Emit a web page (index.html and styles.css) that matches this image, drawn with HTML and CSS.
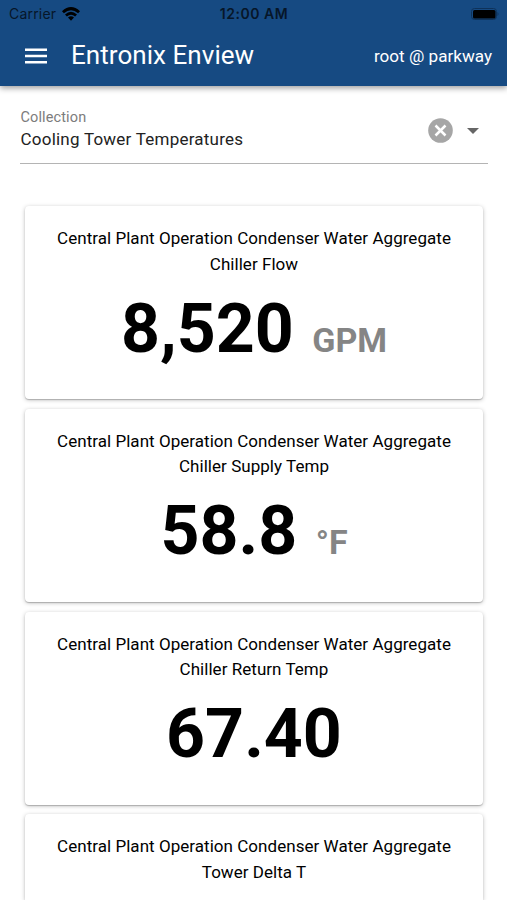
FILE: index.html
```html
<!DOCTYPE html>
<html lang="en">
<head>
<meta charset="utf-8">
<title>Entronix Enview</title>
<link rel="stylesheet" href="styles.css">
</head>
<body>
<header class="appbar">
  <div class="status">
    <div class="carrier"><span>Carrier</span>
      <svg class="wifi" width="18" height="14" viewBox="0 0 18 14"><path d="M0 4.200Q9-4 18 4.200L16.100 6.200Q9 .2 1.900 6.200ZM3 7.400Q9 2.200 15 7.400L13.100 9.400Q9 6 4.900 9.400ZM6 10.500Q9 8 12 10.500L9 13.700Z"/></svg>
    </div>
    <span class="time">12:00 AM</span>
    <svg class="battery" width="28" height="12" viewBox="0 0 28 12"><rect x=".5" y=".5" width="25" height="11" rx="3" fill="none" stroke="#0e325a"/><rect x="2" y="2" width="22.500" height="8.500" rx="1.500"/><path d="M26.500 4Q28.500 6 26.500 8Z" fill="#0e325a"/></svg>
  </div>
  <div class="toolbar">
    <svg class="menu" width="22" height="16" viewBox="0 0 22 16"><path d="M0 .5h22V3H0zM0 6.700h22v2.500H0zM0 12.900h22v2.500H0z"/></svg>
    <h1>Entronix Enview</h1>
    <span class="user">root @ parkway</span>
  </div>
</header>
<main>
  <div class="select">
    <div class="field"><label>Collection</label><span>Cooling Tower Temperatures</span></div>
    <svg class="clear" width="25" height="25" viewBox="0 0 25 25"><circle cx="12.500" cy="12.500" r="12.300" fill="#a6a6a6"/><path d="M7.500 7.500l10 10m0-10l-10 10" stroke="#fff" stroke-width="2.500"/></svg>
    <svg class="arrow" width="12" height="6" viewBox="0 0 12 6"><path d="M0 0h12L6 6z" fill="#666"/></svg>
  </div>
  <div class="cards">
    <section class="card"><h2>Central Plant Operation Condenser Water Aggregate<br>Chiller Flow</h2><p><b>8,520</b><span class="unit">GPM</span></p></section>
    <section class="card"><h2>Central Plant Operation Condenser Water Aggregate<br>Chiller Supply Temp</h2><p><b>58.8</b><span class="unit">°F</span></p></section>
    <section class="card"><h2>Central Plant Operation Condenser Water Aggregate<br>Chiller Return Temp</h2><p><b>67.40</b></p></section>
    <section class="card"><h2>Central Plant Operation Condenser Water Aggregate<br>Tower Delta T</h2></section>
  </div>
</main>
</body>
</html>
```

FILE: styles.css
```css
* { box-sizing: border-box; }
body { margin: 0; height: 900px; overflow: hidden; background: #fff; color: #000; font-family: Roboto, sans-serif; display: flex; flex-direction: column; }
h1, h2, p { margin: 0; }
svg { display: block; flex: none; }
.appbar { flex: none; height: 86px; background: #164a82; box-shadow: 0 2px 6px rgba(0,0,0,.4); z-index: 1; }
.status { height: 27px; padding: 0 8px 0 9px; display: grid; grid-template-columns: 1fr auto 1fr; align-items: center; font: 14px/27px Inter, sans-serif; color: #061629; }
.carrier { display: flex; align-items: center; gap: 6px; letter-spacing: .2px; }
.time { font-weight: 600; letter-spacing: .55px; }
.battery { justify-self: end; }
.toolbar { height: 58px; padding: 0 15px 0 25px; display: flex; align-items: center; color: #fff; }
.menu { fill: #fff; }
h1 { margin: -2px 0 0 24px; font-size: 26px; font-weight: 400; line-height: 36px; letter-spacing: .05px; }
.user { font-size: 17.1px; margin-left: auto; }
main { flex: 1; min-height: 0; overflow: hidden; }
.select { margin: 19px 19px 0 20px; height: 59px; border-bottom: 1px solid #b4b4b4; display: flex; align-items: flex-start; }
.field { flex: 1; padding-left: .5px; display: flex; flex-direction: column; font-size: 17px; line-height: 21px; letter-spacing: .23px; color: #222; }
.field label { padding-top: 1px; font-size: 14.5px; color: #7c7c7c; line-height: 23px; letter-spacing: .12px; }
.clear { margin: 13px 14px 0 0; }
.arrow { margin: 23px 9px 0 0; }
.cards { margin: 42px 24px 0 25px; display: flex; flex-direction: column; gap: 9.8px; }
.card { flex: none; height: 193px; padding: 20px 0; border-radius: 4px; background: #fff; box-shadow: 0 1px 4px rgba(0,0,0,.25), 0 1px 1px rgba(0,0,0,.2); text-align: center; }
.card:last-child { height: 85.6px; border-radius: 4px 4px 0 0; }
h2 { font-size: 17px; font-weight: 400; line-height: 25.5px; letter-spacing: .04px; }
.card p { display: flex; justify-content: center; align-items: baseline; gap: 18.5px; font-weight: 700; line-height: 80px; margin-top: 11.5px; }
.card b { font-size: 68px; font-weight: 700; }
.unit { font-size: 34px; color: #858585; }
```
